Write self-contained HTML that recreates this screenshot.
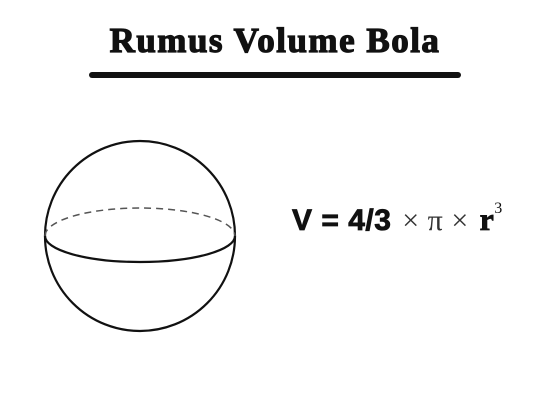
<!DOCTYPE html>
<html><head><style>
body{margin:0;width:550px;height:410px;background:#fff;position:relative;overflow:hidden}
.t{position:absolute;left:0;width:550px;top:21px;text-align:center;font:bold 35px "Liberation Serif",serif;color:#111;letter-spacing:1.5px;-webkit-text-stroke:1.2px #111}
.l{position:absolute;left:89px;top:72px;width:372px;height:6px;background:#111;border-radius:3px}
.f{position:absolute;left:292px;top:201px;font:bold 30px "Liberation Sans",sans-serif;color:#111;white-space:nowrap;-webkit-text-stroke:0.8px #111;letter-spacing:0.5px}
.s{font:30px "Liberation Serif",serif;color:#333;font-weight:normal;-webkit-text-stroke:0;margin:0 2px}
.r{font:bold 32px "Liberation Serif",serif}
sup{font:16px "Liberation Serif",serif;position:relative;top:-6px;-webkit-text-stroke:0}
</style></head><body>
<div class="t">Rumus Volume Bola</div>
<div class="l"></div>
<svg style="position:absolute;left:0;top:0" width="550" height="410">
<circle cx="140" cy="236" r="95" fill="none" stroke="#111" stroke-width="2.2"/>
<path d="M45 236 A95 26 0 0 0 235 236" fill="none" stroke="#111" stroke-width="2.2"/>
<path d="M45 236 A95 28 0 0 1 235 236" fill="none" stroke="#555" stroke-width="1.5" stroke-dasharray="7 5"/>
</svg>
<div class="f">V = 4/3 <span class="s">× π ×</span> <span class="r">r</span><sup>3</sup></div>
</body></html>
